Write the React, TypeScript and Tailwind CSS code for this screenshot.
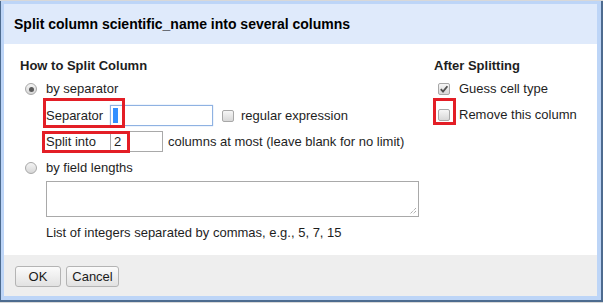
import React from "react";

function Radio({ checked }: { checked?: boolean }) {
  return (
    <span className="flex h-[12px] w-[12px] shrink-0 items-center justify-center rounded-full border border-[#a8a8a8] bg-linear-to-b from-[#f4f4f4] to-[#d6d6d6]">
      {checked && <span className="h-[5px] w-[5px] rounded-full bg-[#5a5a5a]" />}
    </span>
  );
}

function Checkbox({ checked }: { checked?: boolean }) {
  return (
    <span className="flex h-[12px] w-[12px] shrink-0 items-center justify-center rounded-[2px] border border-[#a8a8a8] bg-linear-to-b from-[#f6f6f6] to-[#d8d8d8]">
      {checked && (
        <svg width="10" height="10" viewBox="0 0 10 10">
          <path d="M1.8 5.2 L4 7.6 L8.4 2.2" fill="none" stroke="#4f4f4f" strokeWidth="1.8" />
        </svg>
      )}
    </span>
  );
}

function Button({ label, width }: { label: string; width: string }) {
  return (
    <button
      className={`h-[21px] ${width} rounded-[3px] border border-[#b4b4b4] bg-linear-to-b from-[#fbfbfb] to-[#e2e2e2] text-[13px] leading-none text-[#1a1a1a]`}
    >
      {label}
    </button>
  );
}

export default function App() {
  return (
    <div className="h-[303px] w-[603px] bg-[#d8d8d8] pt-px font-['Liberation_Sans',Arial,sans-serif] text-[13px] text-[#1e1e1e]">
      <div className="flex h-[301px] flex-col border-r-2 border-b-2 border-l border-[#4d6b8f] bg-[#bdd5f7] pt-[3px] pr-[4px] pb-[4px] pl-[3px]">
        <div className="flex h-[40px] items-center bg-[#dfeafb] pl-[10px] text-[14px] font-bold text-black">
          Split column scientific_name into several columns
        </div>

        <div className="relative flex h-[211px] bg-white pt-[14px] pl-[16px]">
          <div className="flex w-[414px] flex-col">
            <div className="h-[16px] leading-[16px] font-bold">How to Split Column</div>
            <div className="mt-[6px] flex h-[18px] items-center">
              <span className="ml-[5px]"><Radio checked /></span>
              <span className="ml-[9px]">by separator</span>
            </div>
            <div className="mt-[7px] ml-[26px] flex h-[21px] items-center">
              <span className="w-[64px]">Separator</span>
              <div className="flex h-[21px] w-[103px] items-center border border-[#8fb2e2] pl-[2px] shadow-[0_0_1px_#9dbcea]">
                <span className="h-[15px] w-[5px] bg-[#3390ff]" />
              </div>
              <span className="ml-[9px]"><Checkbox /></span>
              <span className="ml-[7px]">regular expression</span>
            </div>
            <div className="mt-[5px] ml-[26px] flex h-[21px] items-center">
              <span className="w-[64px]">Split into</span>
              <div className="flex h-[21px] w-[53px] items-center border border-[#a9a9a9] pl-[3px]">2</div>
              <span className="ml-[5px]">columns at most (leave blank for no limit)</span>
            </div>
            <div className="mt-[7px] flex h-[18px] items-center">
              <span className="ml-[5px]"><Radio /></span>
              <span className="ml-[9px]">by field lengths</span>
            </div>
            <div className="relative mt-[4px] ml-[26px] h-[36px] w-[373px] border border-[#a9a9a9]">
              <svg className="absolute right-[1px] bottom-[1px]" width="9" height="9" viewBox="0 0 9 9">
                <path d="M8 2 L2 8 M8 5 L5 8" stroke="#8a8a8a" strokeWidth="1" strokeDasharray="1 1" />
              </svg>
            </div>
            <div className="mt-[8px] ml-[26px] h-[16px] leading-[16px]">
              List of integers separated by commas, e.g., 5, 7, 15
            </div>
          </div>

          <div className="flex flex-col">
            <div className="h-[16px] leading-[16px] font-bold">After Splitting</div>
            <div className="mt-[6px] flex h-[18px] items-center">
              <span className="ml-[4px]"><Checkbox checked /></span>
              <span className="ml-[9px]">Guess cell type</span>
            </div>
            <div className="mt-[8px] flex h-[18px] items-center">
              <span className="ml-[4px]"><Checkbox /></span>
              <span className="ml-[9px]">Remove this column</span>
            </div>
          </div>

          <div className="absolute top-[54px] left-[39px] h-[30px] w-[82px] border-[3px] border-[#e31e26]" />
          <div className="absolute top-[87px] left-[38px] h-[22px] w-[88px] border-[3px] border-[#e31e26]" />
          <div className="absolute top-[54px] left-[429px] h-[27px] w-[23px] border-[3px] border-[#e31e26]" />
        </div>

        <div className="flex h-[41px] items-start gap-[5px] bg-[#eeeeee] pt-[11px] pl-[11px]">
          <Button label="OK" width="w-[46px]" />
          <Button label="Cancel" width="w-[53px]" />
        </div>
      </div>
    </div>
  );
}
